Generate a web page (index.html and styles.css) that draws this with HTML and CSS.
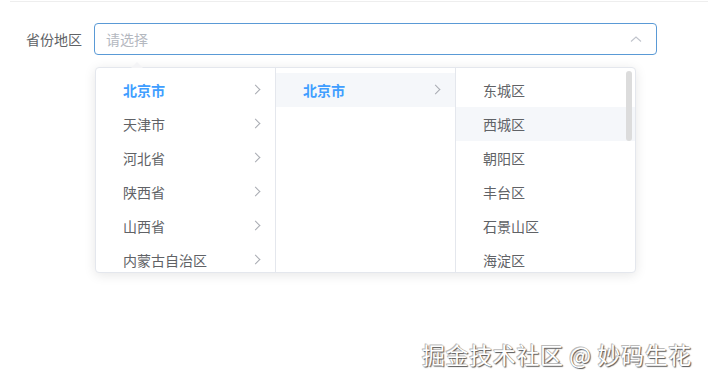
FILE: index.html
```html
<html lang="zh-CN">
<head>
  <meta charset="UTF-8" />
  <title>省份地区</title>
  <link rel="stylesheet" href="styles.css">
</head>
<body>
  <div class="topline"></div>
  <div class="form">
    <div class="form-item">
      <label class="form-label">省份地区</label>
      <div class="cascader">
        <div class="input">
          <span class="placeholder">请选择</span>
          <svg class="caret" width="12" height="8" viewBox="0 0 12 8"><path d="M1 6.5 L6 2 L11 6.5" fill="none" stroke="#c0c4cc" stroke-width="1.1"/></svg>
        </div>
        <div class="dropdown">
          <span class="popper-arrow"></span>
          <ul class="menu">
            <li class="node active">北京市<i class="arrow"></i></li>
            <li class="node">天津市<i class="arrow"></i></li>
            <li class="node">河北省<i class="arrow"></i></li>
            <li class="node">陕西省<i class="arrow"></i></li>
            <li class="node">山西省<i class="arrow"></i></li>
            <li class="node">内蒙古自治区<i class="arrow"></i></li>
          </ul>
          <ul class="menu">
            <li class="node active hl">北京市<i class="arrow"></i></li>
          </ul>
          <ul class="menu scroll">
            <li class="node">东城区</li>
            <li class="node hl">西城区</li>
            <li class="node">朝阳区</li>
            <li class="node">丰台区</li>
            <li class="node">石景山区</li>
            <li class="node">海淀区</li>
            <span class="thumb"></span>
          </ul>
        </div>
      </div>
    </div>
  </div>
  <div class="watermark">掘金技术社区 @ 妙码生花</div>
</body>
</html>
```

FILE: styles.css
```css
body { margin:0; background:#fff; font-family:"Noto Sans CJK SC", "Noto Sans", sans-serif; font-size:14px; color:#606266; }
.topline { height:1px; margin:1px 0 0 10px; background:#eee; }
.form { padding-top:21px; }
.form-item { display:flex; align-items:flex-start; }
.form-label { padding-right:12px; box-sizing:border-box; width:94px; text-align:right; line-height:32px; height:32px; color:#606266; }
.cascader { position:relative; width:563px; }
.input {
  height:32px; box-sizing:border-box; border:1px solid #5a9ad6; border-radius:4px;
  display:flex; align-items:center; justify-content:space-between; padding:0 14px 0 11px;
}
.placeholder { color:#b4b8bf; }
.caret { display:block; }
.dropdown {
  position:absolute; top:44px; left:1px;
  display:flex; background:#fff; border:1px solid #e4e7ed; border-radius:4px;
  box-shadow:0 2px 12px rgba(0,0,0,.1);
}
.popper-arrow {
  position:absolute; top:-6px; left:35px; width:0; height:0;
  border:6px solid transparent; border-top:0; border-bottom-color:#f4f4f6;
}
.menu {
  list-style:none; margin:0; padding:5px 0 6px; width:179px; height:193px; overflow:hidden;
  border-right:1px solid #e4e7ed; box-sizing:content-box; position:relative;
}
.menu:last-child { border-right:0; }
.node {
  height:34px; line-height:34px; padding:0 20px 0 27px; position:relative;
  color:#606266;
}
.node.hl { background:#f5f7fa; }
.node.active { color:#409eff; font-weight:bold; }
.arrow {
  position:absolute; right:16px; top:13px; width:6px; height:6px;
  border-top:1px solid #a8abb2; border-right:1px solid #a8abb2; transform:rotate(45deg);
}
.thumb { position:absolute; right:3px; top:3px; width:6px; height:70px; border-radius:3px; background:#dcdcdc; }
.watermark {
  position:absolute; left:422px; top:337px;
  font-size:23px; color:#fff; letter-spacing:0.6px;
  text-shadow:1px 1px 1px #555, -1px -1px 0 #bbb, 0 0 1px #777;
}
```
